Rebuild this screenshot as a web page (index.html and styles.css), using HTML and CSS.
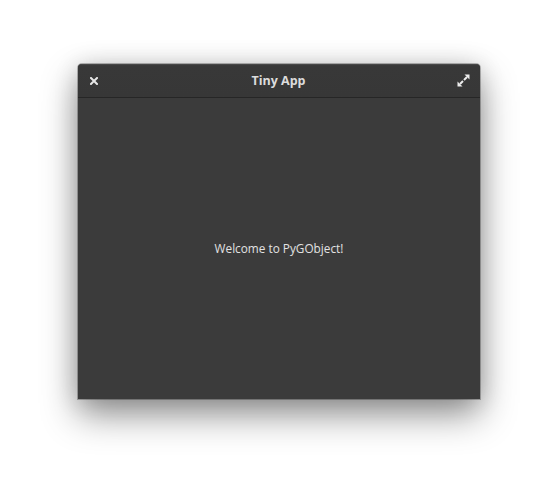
FILE: index.html
```html
<!DOCTYPE html>
<html>
<head>
<meta charset="utf-8">
<link rel="stylesheet" href="styles.css">
</head>
<body>
<div class="window">
  <div class="header">
    <button class="hbtn close" aria-label="Close">
      <svg width="8" height="8" viewBox="0 0 8 8"><path d="M1 1 L7 7 M7 1 L1 7" stroke="#e6e6e6" stroke-width="2" stroke-linecap="square"/></svg>
    </button>
    <div class="title">Tiny App</div>
    <button class="hbtn max" aria-label="Maximize">
      <svg width="13" height="13" viewBox="0 0 13 13">
        <path d="M7.5 0.5 H12.5 V5.5 Z" fill="#ececec"/>
        <path d="M0.5 7.5 V12.5 H5.5 Z" fill="#ececec"/>
        <path d="M10 3 L7 6 M3 10 L6 7" stroke="#ececec" stroke-width="2"/>
      </svg>
    </button>
  </div>
  <div class="content">Welcome to PyGObject!</div>
</div>
</body>
</html>
```
FILE: styles.css
```css
html, body { margin: 0; padding: 0; background: #ffffff; }
body {
  width: 558px; height: 491px; box-sizing: border-box;
  padding: 64px 0 0 78px;
  font-family: "Open Sans", "DejaVu Sans", sans-serif;
}
.window {
  width: 402px; height: 335px;
  display: flex; flex-direction: column;
  background: #3b3b3b;
  border-radius: 4px 4px 0 0;
  box-shadow: 0 16px 36px rgba(0,0,0,0.42), 0 2px 24px rgba(0,0,0,0.16), 0 0 0 1px rgba(0,0,0,0.25);
  overflow: hidden;
}
.header {
  height: 33px; flex: none;
  display: flex; align-items: center; justify-content: space-between;
  padding: 0 10px 0 12px;
  background: linear-gradient(#3e3e3e 0, #383838 2px, #373737 100%);
  border-bottom: 1px solid #262626;
  box-shadow: inset 0 1px 0 rgba(255,255,255,0.06);
}
.hbtn {
  background: none; border: 0; padding: 0; margin: 0;
  display: flex; align-items: center; justify-content: center;
  width: 13px; height: 13px;
}
.close { width: 8px; height: 8px; }
.title {
  color: #dcdcdc; font-weight: 700; font-size: 12.5px;
  padding-left: 2px;
}
.content {
  flex: 1;
  display: flex; align-items: center; justify-content: center;
  color: #e2e2e2; font-size: 11.8px;
  padding-bottom: 2px;
}
```
